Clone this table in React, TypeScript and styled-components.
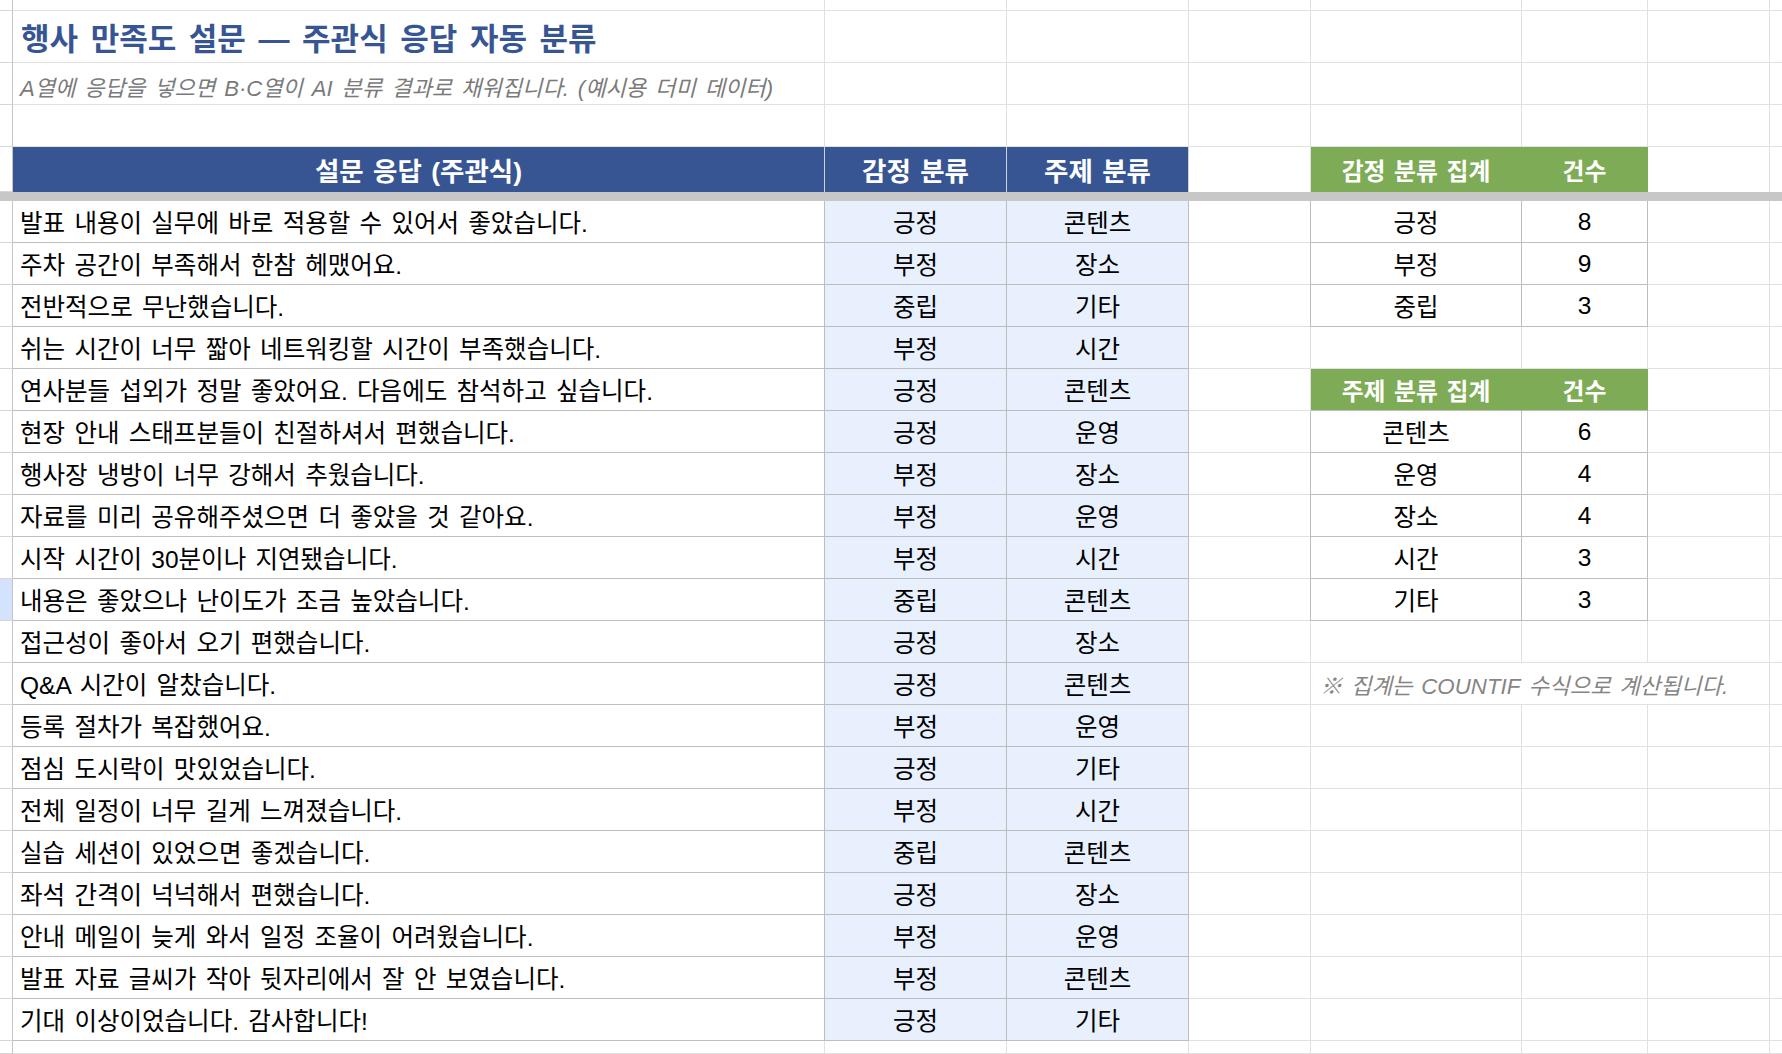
import React from 'react';
import styled, { createGlobalStyle, css } from 'styled-components';

type Sentiment = '긍정' | '부정' | '중립';
type Topic = '콘텐츠' | '운영' | '장소' | '시간' | '기타';

type Response = {
  text: string;
  sentiment: Sentiment;
  topic: Topic;
};

const responses: Response[] = [
  { text: '발표 내용이 실무에 바로 적용할 수 있어서 좋았습니다.', sentiment: '긍정', topic: '콘텐츠' },
  { text: '주차 공간이 부족해서 한참 헤맸어요.', sentiment: '부정', topic: '장소' },
  { text: '전반적으로 무난했습니다.', sentiment: '중립', topic: '기타' },
  { text: '쉬는 시간이 너무 짧아 네트워킹할 시간이 부족했습니다.', sentiment: '부정', topic: '시간' },
  { text: '연사분들 섭외가 정말 좋았어요. 다음에도 참석하고 싶습니다.', sentiment: '긍정', topic: '콘텐츠' },
  { text: '현장 안내 스태프분들이 친절하셔서 편했습니다.', sentiment: '긍정', topic: '운영' },
  { text: '행사장 냉방이 너무 강해서 추웠습니다.', sentiment: '부정', topic: '장소' },
  { text: '자료를 미리 공유해주셨으면 더 좋았을 것 같아요.', sentiment: '부정', topic: '운영' },
  { text: '시작 시간이 30분이나 지연됐습니다.', sentiment: '부정', topic: '시간' },
  { text: '내용은 좋았으나 난이도가 조금 높았습니다.', sentiment: '중립', topic: '콘텐츠' },
  { text: '접근성이 좋아서 오기 편했습니다.', sentiment: '긍정', topic: '장소' },
  { text: 'Q&A 시간이 알찼습니다.', sentiment: '긍정', topic: '콘텐츠' },
  { text: '등록 절차가 복잡했어요.', sentiment: '부정', topic: '운영' },
  { text: '점심 도시락이 맛있었습니다.', sentiment: '긍정', topic: '기타' },
  { text: '전체 일정이 너무 길게 느껴졌습니다.', sentiment: '부정', topic: '시간' },
  { text: '실습 세션이 있었으면 좋겠습니다.', sentiment: '중립', topic: '콘텐츠' },
  { text: '좌석 간격이 넉넉해서 편했습니다.', sentiment: '긍정', topic: '장소' },
  { text: '안내 메일이 늦게 와서 일정 조율이 어려웠습니다.', sentiment: '부정', topic: '운영' },
  { text: '발표 자료 글씨가 작아 뒷자리에서 잘 안 보였습니다.', sentiment: '부정', topic: '콘텐츠' },
  { text: '기대 이상이었습니다. 감사합니다!', sentiment: '긍정', topic: '기타' },
];

const sentiments: Sentiment[] = ['긍정', '부정', '중립'];
const topics: Topic[] = ['콘텐츠', '운영', '장소', '시간', '기타'];

const countBy = <K extends string>(keys: K[], pick: (r: Response) => K) =>
  keys.map((k) => ({ label: k, count: responses.filter((r) => pick(r) === k).length }));

const sentimentSummary = countBy(sentiments, (r) => r.sentiment);
const topicSummary = countBy(topics, (r) => r.topic);

// what sits in columns E:G next to each data row
type Side =
  | { kind: 'blank' }
  | { kind: 'head'; label: string }
  | { kind: 'count'; label: string; count: number }
  | { kind: 'note'; text: string };

const sideFor = (i: number): Side => {
  if (i < 3) return { kind: 'count', ...sentimentSummary[i] };
  if (i === 4) return { kind: 'head', label: '주제 분류 집계' };
  if (i >= 5 && i < 10) return { kind: 'count', ...topicSummary[i - 5] };
  if (i === 11) return { kind: 'note', text: '※ 집계는 COUNTIF 수식으로 계산됩니다.' };
  return { kind: 'blank' };
};

const SELECTED_ROW = 9;

const FONT = `'Liberation Sans', 'Noto Sans CJK KR', sans-serif`;
const LIGHT = '#e1e1e1';
const DARK = '#bdbdbd';
const NAVY = '#385593';
const GREEN = '#7eab56';

const GlobalStyle = createGlobalStyle`
  html, body {
    margin: 0;
    padding: 0;
    background: #ffffff;
  }
  body {
    overflow: hidden;
    font-family: ${FONT};
  }
`;

const Sheet = styled.div`
  display: grid;
  grid-template-columns: 13px 812px 182px 182px 122px 211px 126px 122px 1fr;
  grid-template-rows: 11px 52px 42px 42px 45px 9px repeat(20, 42px) 1fr;
  width: 100vw;
  height: 1054px;
  overflow: hidden;
  font-family: ${FONT};
  color: #000;
`;

const RowHead = styled.div<{ $active?: boolean }>`
  box-sizing: border-box;
  background: ${({ $active }) => ($active ? '#d3e3fd' : '#ffffff')};
  border-right: 1px solid #c4c4c4;
  border-bottom: 1px solid #d6d6d6;
`;

const FreezeBar = styled.div`
  grid-column: 1 / -1;
  background: #c7c7c7;
`;

type Kind = 'plain' | 'body' | 'label' | 'sum' | 'blue' | 'green';

const kinds: Record<Kind, ReturnType<typeof css>> = {
  plain: css`
    border-right: 1px solid ${LIGHT};
    border-bottom: 1px solid ${LIGHT};
  `,
  body: css`
    border-right: 1px solid ${DARK};
    border-bottom: 1px solid ${DARK};
  `,
  label: css`
    background: #e8f0fd;
    border-right: 1px solid ${DARK};
    border-bottom: 1px solid ${DARK};
    justify-content: center;
  `,
  sum: css`
    border-right: 1px solid ${DARK};
    border-bottom: 1px solid ${DARK};
    justify-content: center;
  `,
  blue: css`
    background: ${NAVY};
    color: #ffffff;
    font-weight: 700;
    font-size: 26.5px;
    word-spacing: 2px;
    border-right: 1px solid #cdd1d9;
    justify-content: center;
  `,
  green: css`
    background: ${GREEN};
    color: #ffffff;
    font-weight: 700;
    font-size: 23.8px;
    word-spacing: 2px;
    border-right: 1px solid ${GREEN};
    justify-content: center;
  `,
};

const Cell = styled.div<{ $kind?: Kind; $edge?: boolean; $under?: boolean; $flush?: boolean; $span?: number }>`
  box-sizing: border-box;
  display: flex;
  align-items: center;
  min-width: 0;
  padding: 0 7px;
  white-space: nowrap;
  overflow: hidden;
  background: #ffffff;
  font-size: 24.5px;
  word-spacing: 2.5px;
  ${({ $kind = 'plain' }) => kinds[$kind]}
  ${({ $span }) => $span && `grid-column: span ${$span};`}
  ${({ $edge }) => $edge && `box-shadow: -1px 0 0 ${DARK};`}
  ${({ $under }) => $under && `border-bottom: 1px solid ${DARK};`}
  ${({ $flush }) => $flush && `border-bottom: none;`}
`;

const Title = styled.span`
  font-size: 31px;
  font-weight: 700;
  color: ${NAVY};
  word-spacing: 4px;
  padding-left: 1px;
`;

const Subtitle = styled.span`
  font-size: 22.1px;
  font-style: italic;
  color: #7a7a7a;
  word-spacing: 2.8px;
  padding-top: 4px;
`;

const Note = styled.span`
  font-size: 22.3px;
  font-style: italic;
  color: #858585;
  word-spacing: 2.5px;
  padding-left: 2px;
`;

const Blanks: React.FC<{ n: number; flush?: boolean }> = ({ n, flush }) => (
  <>
    {Array.from({ length: n }, (_, i) => (
      <Cell key={i} $flush={flush} />
    ))}
  </>
);

const SideCells: React.FC<{ side: Side }> = ({ side }) => {
  switch (side.kind) {
    case 'count':
      return (
        <>
          <Cell $kind="sum" $edge>
            {side.label}
          </Cell>
          <Cell $kind="sum">{side.count}</Cell>
          <Cell />
        </>
      );
    case 'head':
      return (
        <>
          <Cell $kind="green" $under>
            {side.label}
          </Cell>
          <Cell $kind="green" $under>
            건수
          </Cell>
          <Cell />
        </>
      );
    case 'note':
      return (
        <Cell $span={3}>
          <Note>{side.text}</Note>
        </Cell>
      );
    default:
      return <Blanks n={3} />;
  }
};

const App: React.FC = () => {
  return (
    <>
      <GlobalStyle />
      <Sheet>
        {/* row peeking above the title */}
        <RowHead />
        <Blanks n={8} />

        <RowHead />
        <Cell>
          <Title>행사 만족도 설문 — 주관식 응답 자동 분류</Title>
        </Cell>
        <Blanks n={7} />

        <RowHead />
        <Cell>
          <Subtitle>A열에 응답을 넣으면 B·C열이 AI 분류 결과로 채워집니다. (예시용 더미 데이터)</Subtitle>
        </Cell>
        <Blanks n={7} />

        <RowHead />
        <Blanks n={8} />

        <RowHead />
        <Cell $kind="blue">설문 응답 (주관식)</Cell>
        <Cell $kind="blue">감정 분류</Cell>
        <Cell $kind="blue">주제 분류</Cell>
        <Cell $flush />
        <Cell $kind="green">감정 분류 집계</Cell>
        <Cell $kind="green">건수</Cell>
        <Blanks n={2} flush />

        <FreezeBar />

        {responses.map((r, i) => (
          <React.Fragment key={i}>
            <RowHead $active={i === SELECTED_ROW} />
            <Cell $kind="body">{r.text}</Cell>
            <Cell $kind="label">{r.sentiment}</Cell>
            <Cell $kind="label">{r.topic}</Cell>
            <Cell />
            <SideCells side={sideFor(i)} />
            <Cell />
          </React.Fragment>
        ))}

        <RowHead />
        <Blanks n={8} />
      </Sheet>
    </>
  );
};

export default App;
